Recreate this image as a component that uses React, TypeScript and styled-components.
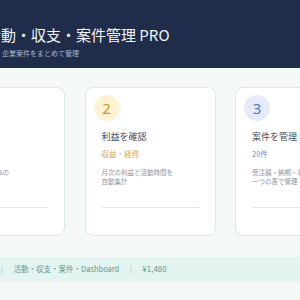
import React from "react";
import styled, { createGlobalStyle } from "styled-components";

const GlobalStyle = createGlobalStyle`
  html, body { margin: 0; padding: 0; }
  body {
    background: #f4f9f8;
    font-family: "Noto Sans CJK JP", "Noto Sans", sans-serif;
    overflow: hidden;
    width: 300px;
    height: 300px;
  }
`;

const Page = styled.div`
  width: 300px;
  display: flex;
  flex-direction: column;
`;

const Header = styled.header`
  height: 68px;
  background: #1f2d4b;
  display: flex;
  justify-content: center;
`;

const HeaderInner = styled.div`
  width: 432px;
  flex-shrink: 0;
  display: flex;
  align-items: flex-start;
  gap: 12px;
`;

const Logo = styled.div`
  width: 40px;
  height: 40px;
  margin-top: 14px;
  border-radius: 10px;
  background: #2f4a6e;
  flex-shrink: 0;
`;

const TitleBlock = styled.div`
  display: flex;
  flex-direction: column;
  padding-top: 10px;
`;

const Eyebrow = styled.div`
  font-size: 6.5px;
  line-height: 10px;
  letter-spacing: 1px;
  color: #9aaac2;
`;

const Title = styled.h1`
  margin: 5px 0 0;
  font-size: 15px;
  line-height: 20px;
  font-weight: 400;
  color: #f1f4f8;
  white-space: nowrap;
`;

const Subtitle = styled.div`
  margin-top: 3px;
  font-size: 7px;
  line-height: 10px;
  color: #a6b3c7;
  white-space: nowrap;
`;

const Main = styled.main`
  display: flex;
  justify-content: center;
  padding-top: 19px;
`;

const CardGrid = styled.div`
  width: 432px;
  flex-shrink: 0;
  display: grid;
  grid-template-columns: repeat(3, 131px);
  gap: 19.5px;
`;

const Card = styled.section`
  background: #ffffff;
  border: 1px solid #d9ebe8;
  border-radius: 8px;
  padding: 7px 16px 27px;
  display: flex;
  flex-direction: column;
`;

type Tone = "teal" | "gold" | "blue";

const toneColors: Record<Tone, { bg: string; fg: string; tag: string }> = {
  teal: { bg: "#dff2ee", fg: "#3a9a8c", tag: "#4fa89b" },
  gold: { bg: "#fdf2d2", fg: "#c9952b", tag: "#d6a74c" },
  blue: { bg: "#e5ebf8", fg: "#5577c8", tag: "#6f90d8" },
};

const StepBadge = styled.div<{ $tone: Tone }>`
  width: 26px;
  height: 26px;
  margin-left: -8px;
  border-radius: 50%;
  background: ${(p) => toneColors[p.$tone].bg};
  color: ${(p) => toneColors[p.$tone].fg};
  font-family: "Noto Sans", sans-serif;
  font-size: 15px;
  line-height: 26px;
  text-align: center;
`;

const CardTitle = styled.h2`
  margin: 9.5px 0 0;
  font-size: 9px;
  line-height: 12px;
  font-weight: 400;
  color: #454d5b;
`;

const Tag = styled.div<{ $tone: Tone }>`
  margin-top: 6px;
  font-size: 7.5px;
  line-height: 10px;
  color: ${(p) => toneColors[p.$tone].tag};
`;

const Desc = styled.p`
  margin: 9.5px 0 0;
  font-size: 6.5px;
  line-height: 8.5px;
  color: #8e959e;
  white-space: nowrap;
`;

const Divider = styled.hr`
  margin: 22px 0 0;
  border: 0;
  height: 1px;
  background: #dcebe8;
`;

const FooterBand = styled.footer`
  margin-top: 21px;
  height: 24.5px;
  background: #e4f4f1;
  display: flex;
  justify-content: center;
  align-items: center;
`;

const FooterInner = styled.div`
  width: 432px;
  flex-shrink: 0;
  display: flex;
  align-items: center;
  gap: 10.5px;
  padding-left: 16px;
  box-sizing: border-box;
  font-size: 7.5px;
  line-height: 10px;
  color: #5f978f;
  white-space: nowrap;
`;

const Price = styled.span`
  font-size: 8px;
`;

const Sep = styled.span`
  color: #8fbcb5;
`;

const steps: {
  n: number;
  tone: Tone;
  title: string;
  tag: string;
  desc: [string, string];
}[] = [
  { n: 1, tone: "teal", title: "活動を記録", tag: "投稿・撮影", desc: ["日々の投稿やSNSの", "活動を記録"] },
  { n: 2, tone: "gold", title: "利益を確認", tag: "収益・経費", desc: ["月次の利益と活動時間を", "自動集計"] },
  { n: 3, tone: "blue", title: "案件を管理", tag: "20件", desc: ["受注額・納期・状況を", "一つの表で管理"] },
];

export default function App() {
  return (
    <>
      <GlobalStyle />
      <Page>
        <Header>
          <HeaderInner>
            <Logo />
            <TitleBlock>
              <Eyebrow>運営</Eyebrow>
              <Title>活動・収支・案件管理 PRO</Title>
              <Subtitle>PR・企業案件をまとめて管理</Subtitle>
            </TitleBlock>
          </HeaderInner>
        </Header>
        <Main>
          <CardGrid>
            {steps.map((s) => (
              <Card key={s.n}>
                <StepBadge $tone={s.tone}>{s.n}</StepBadge>
                <CardTitle>{s.title}</CardTitle>
                <Tag $tone={s.tone}>{s.tag}</Tag>
                <Desc>
                  {s.desc[0]}
                  <br />
                  {s.desc[1]}
                </Desc>
                <Divider />
              </Card>
            ))}
          </CardGrid>
        </Main>
        <FooterBand>
          <FooterInner>
            <span>Notion 専用</span>
            <Sep>|</Sep>
            <span>活動・収支・案件・Dashboard</span>
            <Sep>|</Sep>
            <Price>¥1,480</Price>
          </FooterInner>
        </FooterBand>
      </Page>
    </>
  );
}
